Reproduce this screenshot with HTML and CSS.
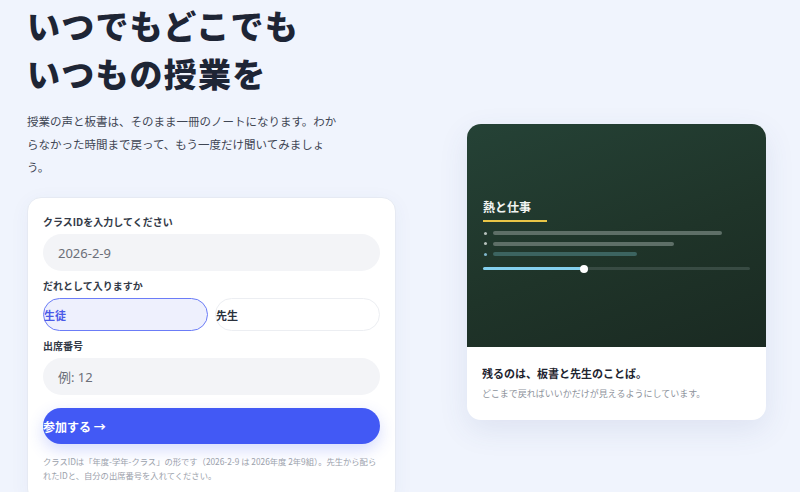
FILE: index.html
```html
<!DOCTYPE html>
<html lang="ja">
<head>
<meta charset="utf-8">
<link rel="stylesheet" href="styles.css">
</head>
<body>
<main class="page">
  <section class="left">
    <h1 class="hero-title">いつでもどこでも<br>いつもの授業を</h1>
    <p class="lead">授業の声と板書は、そのまま一冊のノートになります。わからなかった時間まで戻って、もう一度だけ聞いてみましょう。</p>
    <form class="join-card">
      <div class="field">
        <div class="label">クラスIDを入力してください</div>
        <div class="input">2026-2-9</div>
      </div>
      <div class="field">
        <div class="label">だれとして入りますか</div>
        <div class="roles">
          <div class="role role-active">生徒</div>
          <div class="role">先生</div>
        </div>
      </div>
      <div class="field">
        <div class="label">出席番号</div>
        <div class="input">例: 12</div>
      </div>
      <div class="submit">参加する →</div>
      <p class="note">クラスIDは「年度-学年-クラス」の形です（2026-2-9 は 2026年度 2年9組）。先生から配られたIDと、自分の出席番号を入れてください。</p>
    </form>
  </section>
  <section class="right">
    <div class="preview">
      <div class="board">
        <div class="board-inner">
          <div class="board-title">熱と仕事</div>
          <div class="board-underline"></div>
          <div class="rows">
            <div class="row"><span class="dot"></span><span class="bar bar1"></span></div>
            <div class="row"><span class="dot"></span><span class="bar bar2"></span></div>
            <div class="row"><span class="dot dot-blue"></span><span class="bar bar3"></span></div>
          </div>
          <div class="slider">
            <div class="slider-fill"></div>
            <div class="knob"></div>
          </div>
        </div>
      </div>
      <div class="preview-text">
        <div class="preview-title">残るのは、板書と先生のことば。</div>
        <div class="preview-sub">どこまで戻ればいいかだけが見えるようにしています。</div>
      </div>
    </div>
  </section>
</main>
</body>
</html>
```
FILE: styles.css
```css
* { box-sizing: border-box; }
html, body { margin: 0; padding: 0; }
body {
  background: #f0f4fd;
  font-family: "Noto Sans CJK JP", "Noto Sans", sans-serif;
  color: #1f2937;
  width: 800px;
  height: 492px;
  overflow: hidden;
}
.page {
  display: grid;
  grid-template-columns: 369px 299px;
  column-gap: 71px;
  padding-left: 27px;
}
.left { display: flex; flex-direction: column; }
.hero-title {
  margin: 1px 0 0 0;
  font-size: 33px;
  line-height: 48px;
  letter-spacing: 1.2px;
  font-weight: 900;
  color: #1e2535;
}
.lead {
  margin: 13px 0 0 0;
  font-size: 11.5px;
  line-height: 23px;
  color: #3f4654;
  max-width: 318px;
}
.join-card {
  margin-top: 18px;
  background: #fff;
  border: 1px solid #e6eaf3;
  border-radius: 14px;
  padding: 17px 15px 20px 15px;
  box-shadow: 0 4px 20px rgba(60, 80, 140, 0.05);
}
.field { margin-bottom: 8px; }
.label {
  font-size: 10px;
  line-height: 14px;
  font-weight: 700;
  color: #333a47;
  margin-bottom: 5px;
}
.input {
  height: 37px;
  border-radius: 19px;
  background: #f3f4f7;
  padding-left: 15px;
  display: flex;
  align-items: center;
  font-family: "Noto Sans", "Noto Sans CJK JP", sans-serif;
  font-size: 13px;
  color: #6b6f78;
}
.roles {
  display: grid;
  grid-template-columns: 1fr 1fr;
  gap: 7px;
}
.role {
  height: 33px;
  border-radius: 17px;
  border: 1px solid #eceef2;
  background: #fff;
  display: flex;
  align-items: center;
  font-size: 11px;
  font-weight: 700;
  color: #2b313c;
}
.role-active {
  border-color: #6b7cf7;
  background: #eef0fd;
  color: #4a5ae8;
}
.submit {
  margin-top: 13px;
  height: 36px;
  border-radius: 18px;
  background: #4259f5;
  color: #fff;
  font-size: 12px;
  font-weight: 700;
  display: flex;
  align-items: center;
  box-shadow: 0 6px 16px rgba(66, 89, 245, 0.22);
}
.note {
  margin: 10px 0 0 0;
  font-size: 8.3px;
  line-height: 14px;
  color: #9ba1ab;
}
.right { padding-top: 124px; }
.preview {
  width: 299px;
  border-radius: 14px;
  overflow: hidden;
  background: #fff;
  box-shadow: 0 10px 30px rgba(60, 80, 140, 0.10);
}
.board {
  height: 223px;
  background: linear-gradient(160deg, #254236 0%, #1f3429 55%, #1a2a22 100%);
  display: flex;
  flex-direction: column;
  justify-content: center;
  padding: 0 16px;
}
.board-inner { padding-bottom: 2px; }
.board-title {
  font-size: 12px;
  line-height: 16px;
  font-weight: 700;
  color: #f1f4f2;
}
.board-underline {
  width: 64px;
  height: 2px;
  background: #e8c547;
  margin-top: 5px;
}
.rows {
  margin-top: 9px;
  display: flex;
  flex-direction: column;
  gap: 6.5px;
}
.row { display: flex; align-items: center; gap: 6px; height: 4px; }
.dot {
  width: 3px; height: 3px; border-radius: 50%;
  background: #b7c2bd;
  margin-left: 1px;
}
.dot-blue { background: #7fb6cc; }
.bar { height: 4px; border-radius: 2px; background: #5e6f67; }
.bar1 { width: 229px; }
.bar2 { width: 181px; }
.bar3 { width: 144px; background: #3c6460; }
.slider {
  position: relative;
  margin-top: 11px;
  height: 3px;
  border-radius: 2px;
  background: #384b43;
  width: 267px;
}
.slider-fill {
  width: 101px;
  height: 3px;
  border-radius: 2px;
  background: #84d0ee;
}
.knob {
  position: absolute;
  left: 97px;
  top: -2.5px;
  width: 8px;
  height: 8px;
  border-radius: 50%;
  background: #fff;
}
.preview-text {
  height: 73px;
  padding: 18px 15px 0 15px;
}
.preview-title {
  font-size: 11px;
  line-height: 16px;
  font-weight: 700;
  color: #1e2430;
}
.preview-sub {
  margin-top: 6px;
  font-size: 9px;
  line-height: 13px;
  color: #8d929b;
}
```
